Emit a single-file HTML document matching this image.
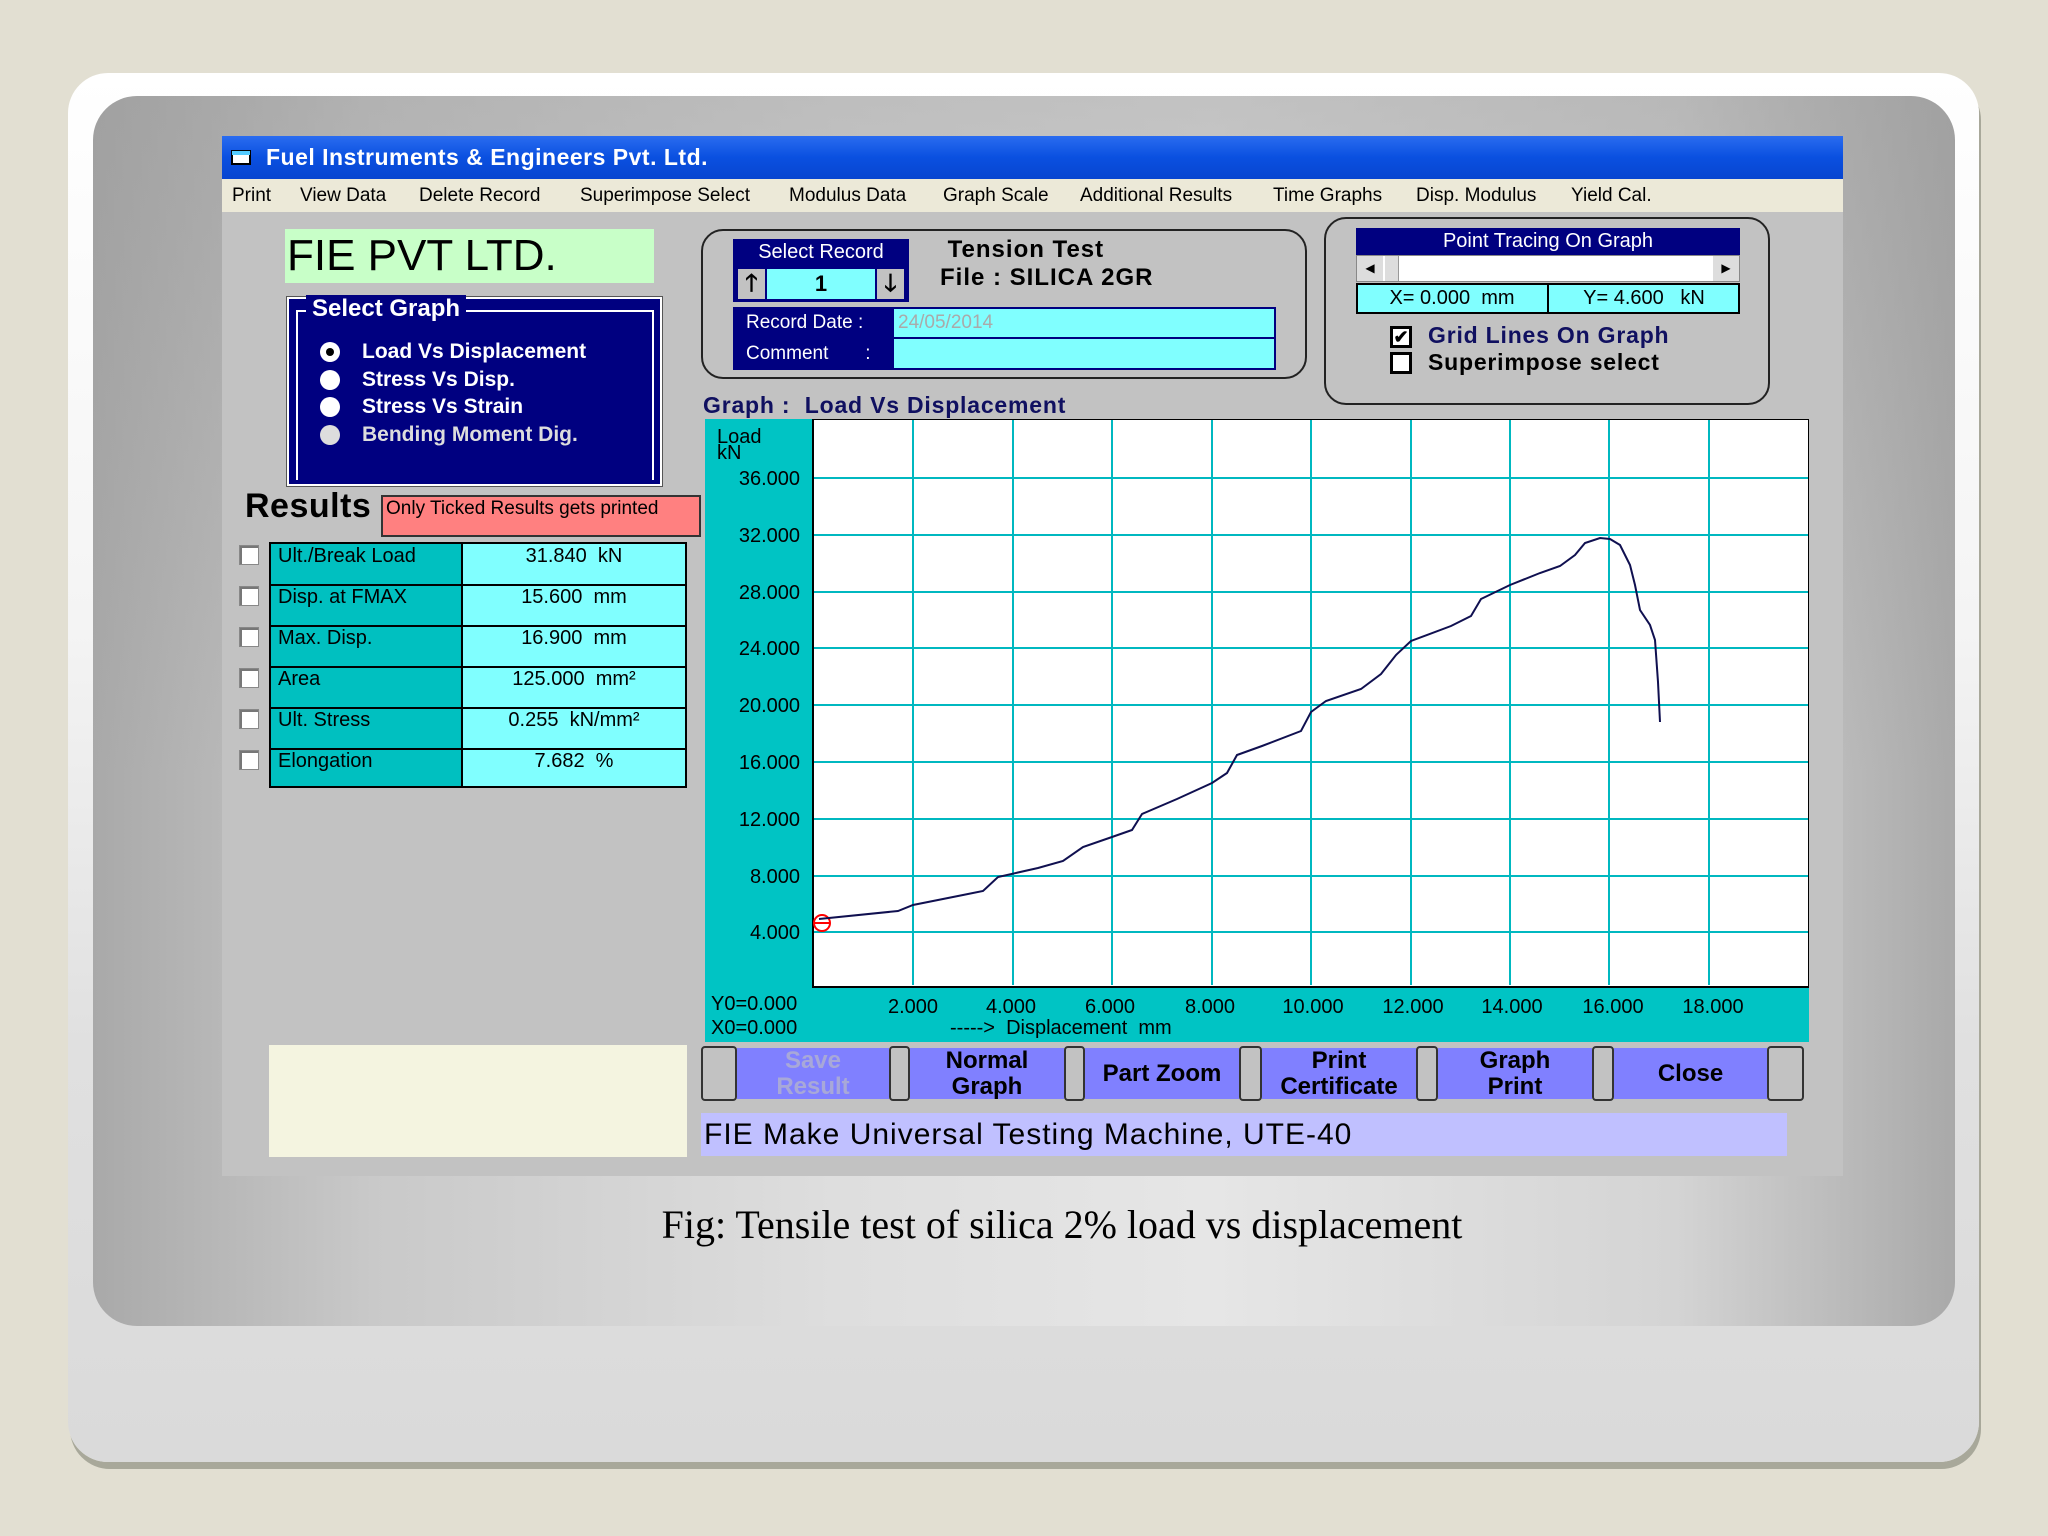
<!DOCTYPE html>
<html><head><meta charset="utf-8"><style>
*{margin:0;padding:0;box-sizing:border-box}
body{width:2048px;height:1536px;background:#e2dfd2;position:relative;overflow:hidden;font-family:"Liberation Sans",sans-serif}
.a{position:absolute}
.card{left:68px;top:73px;width:1911px;height:1389px;background:linear-gradient(#fff 0%,#f4f4f4 40%,#e0e0e0 70%,#dadada 100%);border-radius:40px;box-shadow:2px 7px 0 #a8a89a}
.inner{left:93px;top:96px;width:1862px;height:1230px;border-radius:44px;background:linear-gradient(rgba(150,150,150,.45),rgba(150,150,150,0) 55%),linear-gradient(to right,#a9a9a9,#c9c9c9 15%,#dedede 40%,#e6e6e6 60%,#d4d4d4 85%,#a9a9a9)}
.win{left:222px;top:136px;width:1621px;height:1040px;background:#c2c2c2}
.title{left:222px;top:136px;width:1621px;height:43px;background:linear-gradient(#2a6cf0,#0a50e0 50%,#0845d0);color:#fff;font-weight:bold;font-size:23px;line-height:43px;padding-left:44px;letter-spacing:0.5px}
.menu{left:222px;top:179px;width:1621px;height:33px;background:#ece9d8;font-size:19px;line-height:33px}
.menu span{position:absolute;top:0}
.nv{background:#000080;color:#fff}
.cy{background:#80ffff}
.tc{background:#00c0c0}
.rr{border:2px solid #222;border-radius:22px}
.lbl{font-size:20px;color:#000}
.btn{background:#8080ff;font-weight:bold;font-size:24px;text-align:center;line-height:26px;display:flex;align-items:center;justify-content:center;height:51px;top:1048px}
.sep{background:#c2c2c2;border:2px solid #333;top:1046px;height:55px;border-radius:4px}
.chk{width:20px;height:20px;background:#fff;border:1px solid #888;box-shadow:inset 2px 2px 0 #777}
</style></head><body>
<div class="a card"></div>
<div class="a inner"></div>
<div class="a win"></div>
<div class="a title">Fuel Instruments &amp; Engineers Pvt. Ltd.</div>
<svg class="a" style="left:230px;top:148px" width="26" height="20"><rect x="2" y="3" width="18" height="13" fill="#fff" stroke="#000" stroke-width="2"/><rect x="2" y="3" width="18" height="4" fill="#5cf"/></svg>
<div class="a menu">
<span style="left:10px">Print</span><span style="left:78px">View Data</span><span style="left:197px">Delete Record</span><span style="left:358px">Superimpose Select</span><span style="left:567px">Modulus Data</span><span style="left:721px">Graph Scale</span><span style="left:858px">Additional Results</span><span style="left:1051px">Time Graphs</span><span style="left:1194px">Disp. Modulus</span><span style="left:1349px">Yield Cal.</span>
</div>

<div class="a" style="left:285px;top:229px;width:369px;height:54px;background:#c8ffc8;font-size:44px;line-height:54px;padding-left:2px">FIE PVT LTD.</div>

<div class="a nv" style="left:287px;top:297px;width:375px;height:189px;border:2px solid #fff;outline:1px solid #555"></div>
<div class="a" style="left:296px;top:310px;width:358px;height:170px;border:2px solid #fff;border-bottom:none"></div>
<div class="a nv" style="left:306px;top:295px;font-weight:bold;font-size:24px;padding:0 6px">Select Graph</div>
<div class="a" style="left:320px;top:338px;color:#fff;font-weight:bold;font-size:21px;line-height:27.5px">
<div><span style="display:inline-block;width:20px;height:20px;border-radius:50%;background:#fff;vertical-align:middle;margin-right:22px;position:relative"><span style="position:absolute;left:6px;top:6px;width:8px;height:8px;border-radius:50%;background:#000"></span></span>Load Vs Displacement</div>
<div><span style="display:inline-block;width:20px;height:20px;border-radius:50%;background:#fff;vertical-align:middle;margin-right:22px"></span>Stress Vs Disp.</div>
<div><span style="display:inline-block;width:20px;height:20px;border-radius:50%;background:#fff;vertical-align:middle;margin-right:22px"></span>Stress Vs Strain</div>
<div style="color:#ddd"><span style="display:inline-block;width:20px;height:20px;border-radius:50%;background:#ddd;vertical-align:middle;margin-right:22px"></span>Bending Moment Dig.</div>
</div>

<div class="a" style="left:245px;top:487px;font-weight:bold;font-size:34px;letter-spacing:0.5px">Results</div>
<div class="a" style="left:381px;top:495px;width:320px;height:42px;background:#ff8080;border:2px solid #333;font-size:19px;padding-left:3px;line-height:24px">Only Ticked Results gets printed</div>

<div class="a" style="left:269px;top:542px;width:418px;height:246px;border:2px solid #000;background:#000"></div>
<div class="a tc" style="left:271px;top:544px;width:190px;height:242px"></div>
<div class="a cy" style="left:463px;top:544px;width:222px;height:242px"></div>
<div class="a" style="left:271px;top:584px;width:414px;height:2px;background:#000"></div>
<div class="a" style="left:271px;top:625px;width:414px;height:2px;background:#000"></div>
<div class="a" style="left:271px;top:666px;width:414px;height:2px;background:#000"></div>
<div class="a" style="left:271px;top:707px;width:414px;height:2px;background:#000"></div>
<div class="a" style="left:271px;top:748px;width:414px;height:2px;background:#000"></div>
<div class="a lbl" style="left:278px;top:536px;line-height:41px">Ult./Break Load<br>Disp. at FMAX<br>Max. Disp.<br>Area<br>Ult. Stress<br>Elongation</div>
<div class="a lbl" style="left:463px;width:222px;text-align:center;top:536px;line-height:41px">31.840&nbsp; kN<br>15.600&nbsp; mm<br>16.900&nbsp; mm<br>125.000&nbsp; mm²<br>0.255&nbsp; kN/mm²<br>7.682&nbsp; %</div>
<div class="a chk" style="left:239px;top:545px"></div>
<div class="a chk" style="left:239px;top:586px"></div>
<div class="a chk" style="left:239px;top:627px"></div>
<div class="a chk" style="left:239px;top:668px"></div>
<div class="a chk" style="left:239px;top:709px"></div>
<div class="a chk" style="left:239px;top:750px"></div>

<div class="a" style="left:269px;top:1045px;width:418px;height:112px;background:#f4f4e0"></div>

<div class="a rr" style="left:701px;top:229px;width:606px;height:150px"></div>
<div class="a nv" style="left:733px;top:239px;width:176px;height:27px;font-size:20px;text-align:center;line-height:27px">Select Record</div>
<div class="a nv" style="left:733px;top:266px;width:176px;height:36px"></div>
<div class="a cy" style="left:767px;top:269px;width:108px;height:30px;font-size:22px;font-weight:bold;text-align:center;line-height:30px">1</div>
<div class="a" style="left:738px;top:269px;width:27px;height:30px;background:#c2c2c2;font-size:24px;font-weight:bold;text-align:center;line-height:30px">🡑</div>
<div class="a" style="left:877px;top:269px;width:27px;height:30px;background:#c2c2c2;font-size:24px;font-weight:bold;text-align:center;line-height:30px">🡓</div>
<div class="a" style="left:940px;top:236px;font-size:24px;font-weight:bold;line-height:28px;letter-spacing:1px">&nbsp;Tension Test<br>File : SILICA 2GR</div>
<div class="a nv" style="left:733px;top:307px;width:543px;height:63px"></div>
<div class="a cy" style="left:894px;top:309px;width:380px;height:28px;color:#aaa;font-size:19px;padding-left:4px;line-height:28px">24/05/2014</div>
<div class="a cy" style="left:894px;top:339px;width:380px;height:29px"></div>
<div class="a" style="left:746px;top:307px;color:#fff;font-size:19px;line-height:31px">Record Date :<br>Comment&nbsp;&nbsp;&nbsp;&nbsp;&nbsp;&nbsp;&nbsp;:</div>

<div class="a rr" style="left:1324px;top:217px;width:446px;height:188px"></div>
<div class="a nv" style="left:1356px;top:228px;width:384px;height:27px;font-size:20px;text-align:center;line-height:27px">Point Tracing On Graph</div>
<div class="a" style="left:1356px;top:255px;width:384px;height:27px;background:#fff;border:1px solid #888"></div>
<div class="a" style="left:1357px;top:256px;width:26px;height:25px;background:#ddd;font-size:12px;text-align:center;line-height:25px">◀</div>
<div class="a" style="left:1385px;top:256px;width:14px;height:25px;background:#ddd;border-right:1px solid #999"></div>
<div class="a" style="left:1713px;top:256px;width:26px;height:25px;background:#ddd;font-size:12px;text-align:center;line-height:25px">▶</div>
<div class="a cy" style="left:1356px;top:283px;width:384px;height:31px;border:2px solid #000"></div>
<div class="a" style="left:1547px;top:283px;width:2px;height:31px;background:#000"></div>
<div class="a lbl" style="left:1356px;top:284px;width:192px;text-align:center;line-height:29px">X= 0.000&nbsp; mm</div>
<div class="a lbl" style="left:1548px;top:284px;width:192px;text-align:center;line-height:29px">Y= 4.600&nbsp;&nbsp; kN</div>
<div class="a" style="left:1390px;top:326px;width:22px;height:22px;border:3px solid #000;background:#fff;font-size:18px;font-weight:bold;line-height:16px;text-align:center">✔</div>
<div class="a" style="left:1390px;top:352px;width:22px;height:22px;border:3px solid #000;background:#fff"></div>
<div class="a" style="left:1428px;top:322px;font-weight:bold;font-size:23px;line-height:27px;letter-spacing:0.8px"><span style="color:#101060">Grid Lines On Graph</span><br>Superimpose select</div>

<div class="a" style="left:703px;top:392px;font-weight:bold;font-size:23px;color:#101060;letter-spacing:0.8px">Graph :&nbsp; Load Vs Displacement</div>

<svg class="a" style="left:705px;top:419px" width="1104" height="623" viewBox="705 419 1104 623" font-family="Liberation Sans, sans-serif" font-size="20">
<rect x="705" y="419" width="1104" height="623" fill="#00c4c4"/>
<rect x="813" y="419" width="996" height="568" fill="#fff" stroke="#000" stroke-width="2"/>
<g stroke="#00b8c0" stroke-width="2">
<line x1="913" y1="420" x2="913" y2="985"/><line x1="1013" y1="420" x2="1013" y2="985"/><line x1="1112" y1="420" x2="1112" y2="985"/><line x1="1212" y1="420" x2="1212" y2="985"/><line x1="1311" y1="420" x2="1311" y2="985"/><line x1="1411" y1="420" x2="1411" y2="985"/><line x1="1510" y1="420" x2="1510" y2="985"/><line x1="1609" y1="420" x2="1609" y2="985"/><line x1="1709" y1="420" x2="1709" y2="985"/>
<line x1="814" y1="478" x2="1808" y2="478"/><line x1="814" y1="535" x2="1808" y2="535"/><line x1="814" y1="592" x2="1808" y2="592"/><line x1="814" y1="648" x2="1808" y2="648"/><line x1="814" y1="705" x2="1808" y2="705"/><line x1="814" y1="762" x2="1808" y2="762"/><line x1="814" y1="819" x2="1808" y2="819"/><line x1="814" y1="876" x2="1808" y2="876"/><line x1="814" y1="932" x2="1808" y2="932"/>
</g>
<text x="717" y="443">Load</text><text x="717" y="459">kN</text>
<g text-anchor="end"><text x="800" y="485">36.000</text><text x="800" y="542">32.000</text><text x="800" y="599">28.000</text><text x="800" y="655">24.000</text><text x="800" y="712">20.000</text><text x="800" y="769">16.000</text><text x="800" y="826">12.000</text><text x="800" y="883">8.000</text><text x="800" y="939">4.000</text></g>
<g text-anchor="middle"><text x="913" y="1013">2.000</text><text x="1011" y="1013">4.000</text><text x="1110" y="1013">6.000</text><text x="1210" y="1013">8.000</text><text x="1313" y="1013">10.000</text><text x="1413" y="1013">12.000</text><text x="1512" y="1013">14.000</text><text x="1613" y="1013">16.000</text><text x="1713" y="1013">18.000</text></g>
<text x="711" y="1010">Y0=0.000</text><text x="711" y="1034">X0=0.000</text>
<text x="950" y="1034">-----&gt;&nbsp; Displacement&nbsp; mm</text>
<circle cx="822" cy="923" r="8" fill="none" stroke="red" stroke-width="2"/><line x1="814" y1="923" x2="830" y2="923" stroke="red" stroke-width="2"/>
<polyline fill="none" stroke="#101050" stroke-width="2" points="819,919 898,911 913,905 963,895 983,891 998,877 1038,868 1063,861 1083,847 1112,837 1132,830 1142,814 1177,799 1212,783 1227,773 1237,755 1262,746 1301,731 1311,712 1326,701 1361,689 1381,674 1396,655 1411,641 1451,626 1471,616 1481,599 1510,585 1540,573 1560,566 1575,555 1585,543 1600,538 1610,539 1620,545 1630,565 1635,585 1640,610 1650,625 1655,640 1658,682 1660,722"/>
</svg>

<div class="a sep" style="left:701px;width:36px"></div>
<div class="a sep" style="left:889px;width:21px"></div>
<div class="a sep" style="left:1064px;width:21px"></div>
<div class="a sep" style="left:1239px;width:23px"></div>
<div class="a sep" style="left:1416px;width:22px"></div>
<div class="a sep" style="left:1592px;width:22px"></div>
<div class="a sep" style="left:1767px;width:37px"></div>
<div class="a btn" style="left:737px;width:152px;color:#a8a8d8">Save<br>Result</div>
<div class="a btn" style="left:910px;width:154px">Normal<br>Graph</div>
<div class="a btn" style="left:1085px;width:154px">Part Zoom</div>
<div class="a btn" style="left:1262px;width:154px">Print<br>Certificate</div>
<div class="a btn" style="left:1438px;width:154px">Graph<br>Print</div>
<div class="a btn" style="left:1614px;width:153px">Close</div>

<div class="a" style="left:701px;top:1113px;width:1086px;height:43px;background:#c0c0ff;font-size:30px;line-height:43px;padding-left:3px;letter-spacing:1px">FIE Make Universal Testing Machine, UTE-40</div>

<div class="a" style="left:0;width:2124px;top:1201px;text-align:center;font-family:'Liberation Serif',serif;font-size:40px">Fig: Tensile test of silica 2% load vs displacement</div>
</body></html>
